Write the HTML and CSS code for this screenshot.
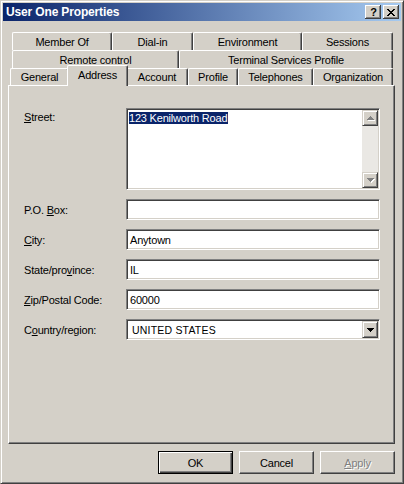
FILE: index.html
```html
<!DOCTYPE html>
<html>
<head>
<meta charset="utf-8">
<title>User One Properties</title>
<link rel="stylesheet" href="styles.css">
</head>
<body>
<div class="window">
  <div class="titlebar">
    <span class="title">User One Properties</span>
    <div class="caps">
      <span class="capbtn help">?</span>
      <span class="capbtn close">
        <svg width="8" height="7" viewBox="0 0 8 7"><path fill="#000" d="M0 0h2v1H0zM6 0h2v1H6zM1 1h2v1H1zM5 1h2v1H5zM2 2h4v1H2zM3 3h2v1H3zM2 4h4v1H2zM1 5h2v1H1zM5 5h2v1H5zM0 6h2v1H0zM6 6h2v1H6z"/></svg>
      </span>
    </div>
  </div>
  <div class="client">
    <div class="tabs">
      <div class="tabrow row1">
        <div class="tab">Member Of</div>
        <div class="tab">Dial-in</div>
        <div class="tab">Environment</div>
        <div class="tab">Sessions</div>
      </div>
      <div class="tabrow row2">
        <div class="tab">Remote control</div>
        <div class="tab">Terminal Services Profile</div>
      </div>
      <div class="tabrow row3">
        <div class="tab">General</div>
        <div class="tab sel">Address</div>
        <div class="tab">Account</div>
        <div class="tab">Profile</div>
        <div class="tab">Telephones</div>
        <div class="tab">Organization</div>
      </div>
    </div>
    <div class="panel">
      <div class="form">
        <div class="lbl lbl-top"><u>S</u>treet:</div>
        <div class="field area">
          <div class="area-text"><span class="hl">123 Kenilworth Road</span></div>
          <div class="vscroll">
            <div class="sbtn">
              <svg width="8" height="5" viewBox="0 0 8 5"><path fill="#fff" d="M4 1h1v1H4zM3 2h3v1H3zM2 3h5v1H2zM1 4h7v1H1z"/><path fill="#808080" d="M3 0h1v1H3zM2 1h3v1H2zM1 2h5v1H1zM0 3h7v1H0z"/></svg>
            </div>
            <div class="strack"></div>
            <div class="sbtn">
              <svg width="8" height="5" viewBox="0 0 8 5"><path fill="#fff" d="M1 1h7v1H1zM2 2h5v1H2zM3 3h3v1H3zM4 4h1v1H4z"/><path fill="#808080" d="M0 0h7v1H0zM1 1h5v1H1zM2 2h3v1H2zM3 3h1v1H3z"/></svg>
            </div>
          </div>
        </div>

        <div class="lbl">P.O. <u>B</u>ox:</div>
        <div class="field line"></div>

        <div class="lbl"><u>C</u>ity:</div>
        <div class="field line">Anytown</div>

        <div class="lbl">State/pro<u>v</u>ince:</div>
        <div class="field line">IL</div>

        <div class="lbl"><u>Z</u>ip/Postal Code:</div>
        <div class="field line">60000</div>

        <div class="lbl">C<u>o</u>untry/region:</div>
        <div class="field select">
          <span class="select-text">UNITED STATES</span>
          <span class="dropbtn">
            <svg width="7" height="4" viewBox="0 0 7 4"><path fill="#000" d="M0 0h7v1H0zM1 1h5v1H1zM2 2h3v1H2zM3 3h1v1H3z"/></svg>
          </span>
        </div>
      </div>
    </div>
    <div class="buttons">
      <div class="btn default">OK</div>
      <div class="btn">Cancel</div>
      <div class="btn disabled"><u>A</u>pply</div>
    </div>
  </div>
</div>
</body>
</html>
```

FILE: styles.css
```css
* { box-sizing: border-box; }
html, body { margin: 0; padding: 0; }
body {
  background: #D4D0C8;
  font-family: "Liberation Sans", Arial, sans-serif;
  font-size: 11px;
  letter-spacing: -0.2px;
  color: #000;
}
u { text-decoration: underline; text-underline-offset: 1px; }

.window {
  width: 404px;
  height: 484px;
  background: #D4D0C8;
  border: 1px solid;
  border-color: #D4D0C8 #404040 #404040 #D4D0C8;
  box-shadow: inset 1px 1px #fff, inset -1px -1px #808080;
  padding: 2px;
  display: flex;
  flex-direction: column;
}

.titlebar {
  height: 18px;
  background: linear-gradient(to right, #0A246A, #A6CAF0);
  display: flex;
  align-items: center;
  justify-content: space-between;
  padding: 0 2px 0 3px;
}
.title {
  color: #fff;
  font-weight: bold;
  font-size: 12px;
  letter-spacing: -0.15px;
}
.caps { display: flex; gap: 2px; }
.capbtn {
  width: 16px;
  height: 14px;
  background: #D4D0C8;
  box-shadow: inset -1px -1px #404040, inset 1px 1px #fff, inset -2px -2px #808080;
  display: flex;
  align-items: center;
  justify-content: center;
}
.help {
  font-weight: bold;
  font-size: 11px;
  letter-spacing: 0;
  line-height: 14px;
  padding-left: 1px;
}
.close svg { display: block; margin-right: 1px; }

.client {
  margin-top: 11px;
  padding: 0 6px 0 5px;
  display: flex;
  flex-direction: column;
}

.tabrow { display: grid; height: 18px; }
.row1 { grid-template-columns: 100px 81px 109px 91px; margin: 0 2px 0 4px; }
.row2 { grid-template-columns: 167px 214px; margin: 0 2px 0 4px; }
.row3 { grid-template-columns: 59px 57px 62px 50px 75px 80px; margin: 0 2px 0 2px; height: 17px; }

.tab {
  background: #D4D0C8;
  border-top: 1px solid #fff;
  border-left: 1px solid #fff;
  border-right: 1px solid #404040;
  box-shadow: inset -1px 0 #808080;
  border-radius: 2px 2px 0 0;
  display: flex;
  align-items: center;
  justify-content: center;
  white-space: nowrap;
}
.tab.sel {
  position: relative;
  z-index: 2;
  margin: -3px -2px -1px;
  padding-bottom: 2px;
}

.panel {
  height: 359px;
  border: 1px solid;
  border-color: #fff #404040 #404040 #fff;
  box-shadow: inset -1px -1px #808080;
  padding: 22px 14px 0 15px;
}

.form {
  display: grid;
  grid-template-columns: 102px 254px;
  grid-template-rows: 82px;
  grid-auto-rows: 21px;
  row-gap: 9px;
}

.lbl {
  padding-top: 5px;
  line-height: 13px;
  white-space: nowrap;
}
.lbl-top { padding-top: 3px; }

.field {
  background: #fff;
  border: 1px solid;
  border-color: #808080 #fff #fff #808080;
  box-shadow: inset 1px 1px #404040, inset -1px -1px #D4D0C8;
}
.line {
  padding: 1px 2px 0 3px;
  line-height: 18px;
}

.area {
  display: flex;
  padding: 1px;
}
.area-text {
  flex: 1;
  padding: 2px 0 0 1px;
  line-height: 13px;
}
.hl {
  background: #0A246A;
  color: #fff;
  padding-right: 1px;
}
.vscroll {
  width: 16px;
  display: flex;
  flex-direction: column;
}
.sbtn {
  height: 16px;
  background: #D4D0C8;
  border: 1px solid;
  border-color: #D4D0C8 #404040 #404040 #D4D0C8;
  box-shadow: inset 1px 1px #fff, inset -1px -1px #808080;
  display: flex;
  align-items: center;
  justify-content: center;
}
.sbtn svg { display: block; margin-left: 1px; }
.strack {
  flex: 1;
  background: #EAE8E4;
}

.select {
  display: flex;
  align-items: center;
  padding: 1px;
}
.select-text {
  flex: 1;
  padding-left: 4px;
  letter-spacing: 0.2px;
  font-size: 10.5px;
}
.dropbtn {
  width: 16px;
  height: 17px;
  background: #D4D0C8;
  border: 1px solid;
  border-color: #D4D0C8 #404040 #404040 #D4D0C8;
  box-shadow: inset 1px 1px #fff, inset -1px -1px #808080;
  display: flex;
  align-items: center;
  justify-content: center;
}
.dropbtn svg { display: block; }

.buttons {
  margin-top: 7px;
  display: flex;
  justify-content: flex-end;
  gap: 6px;
}
.btn {
  width: 75px;
  height: 23px;
  background: #D4D0C8;
  border: 1px solid;
  border-color: #fff #404040 #404040 #fff;
  box-shadow: inset -1px -1px #808080;
  display: flex;
  align-items: center;
  justify-content: center;
}
.btn.default {
  border-color: #000;
  box-shadow: inset 1px 1px #fff, inset -1px -1px #404040, inset -2px -2px #808080;
}
.btn.disabled {
  color: #808080;
  text-shadow: 1px 1px #fff;
}
```
